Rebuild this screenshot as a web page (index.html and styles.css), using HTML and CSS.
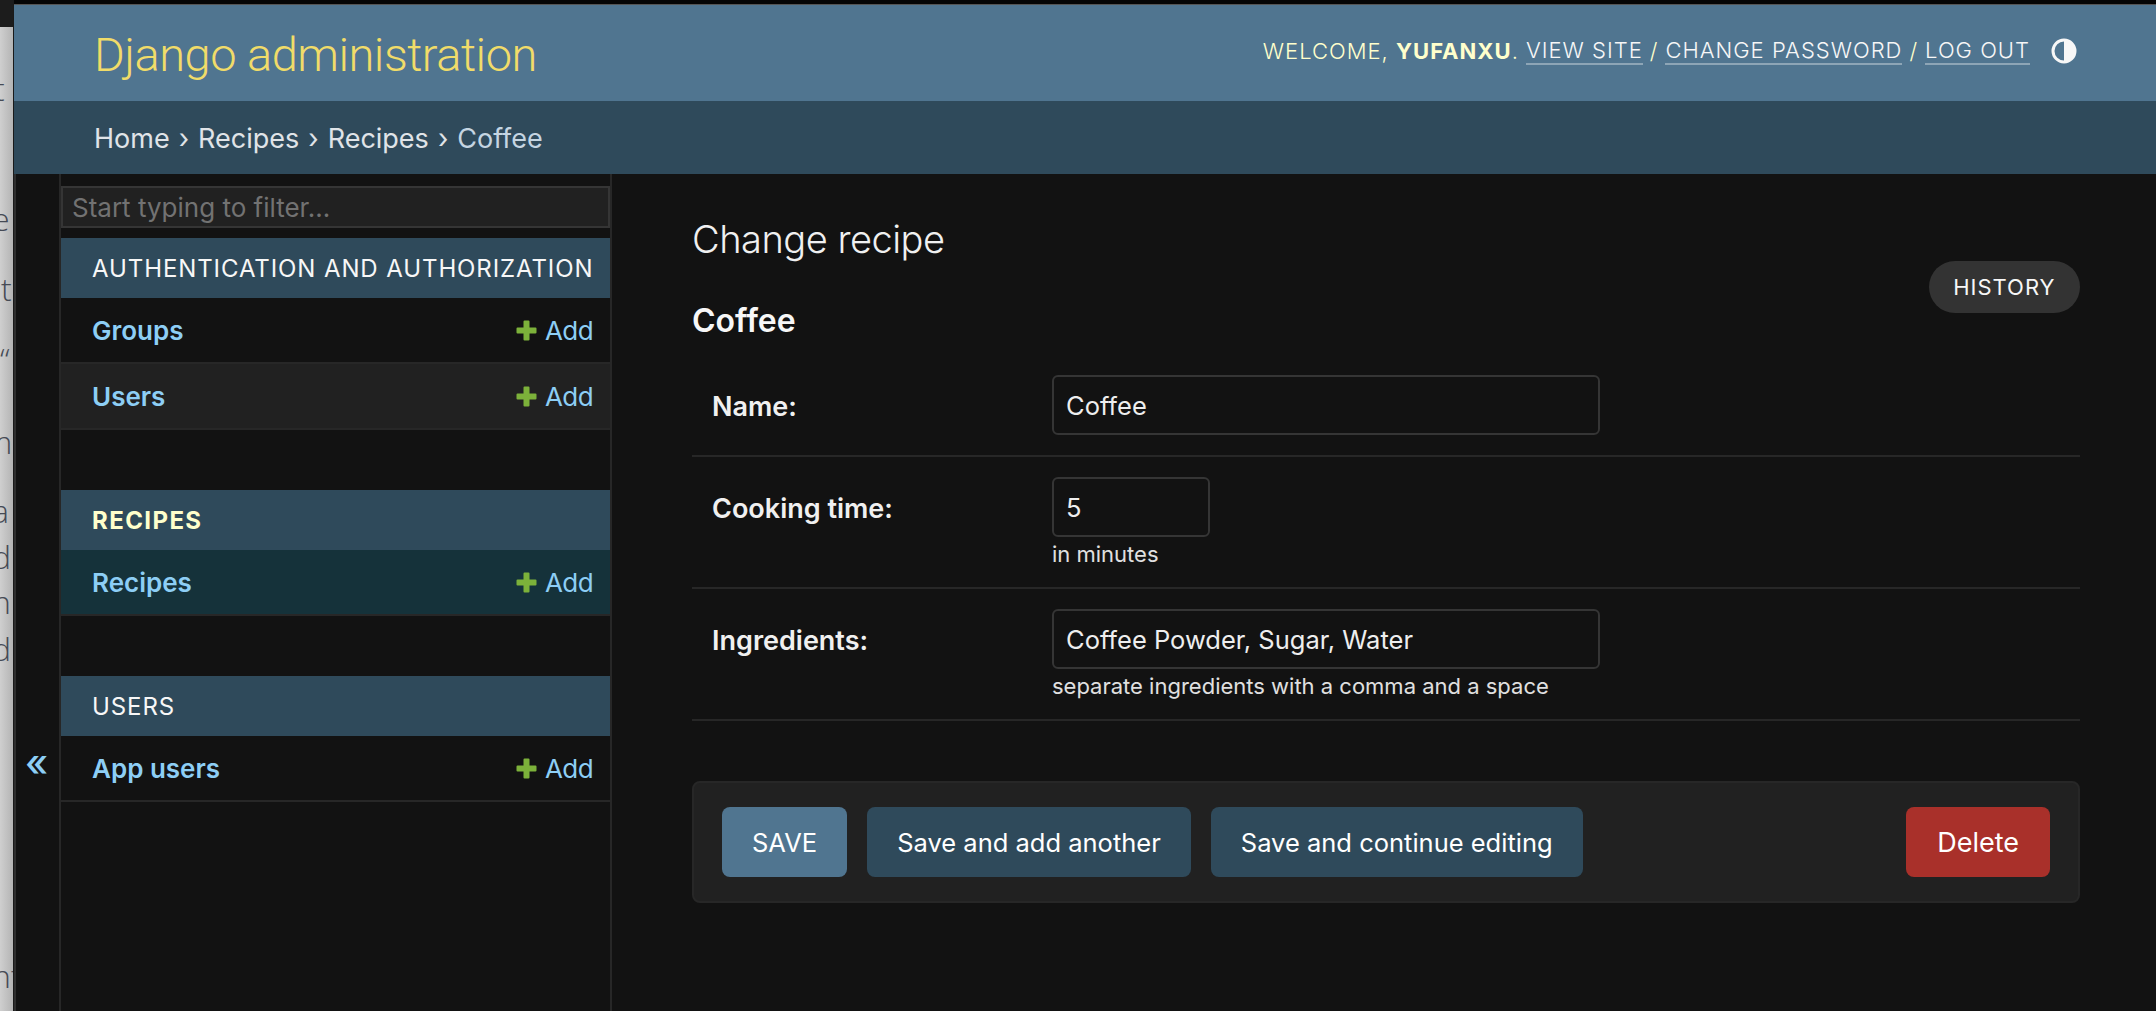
FILE: index.html
```html
<!DOCTYPE html>
<html>
<head>
<meta http-equiv="Content-Type" content="text/html; charset=utf-8"/>
<title>Change recipe | Django site admin</title>
<link rel="stylesheet" href="styles.css">
</head>
<body>

<div class="behind">
  <span class="frag f1">t</span>
  <span class="frag f2">e</span>
  <span class="frag f3">nt</span>
  <span class="frag f4">“</span>
  <span class="frag f5">m</span>
  <span class="frag f6">a</span>
  <span class="frag f7">d</span>
  <span class="frag f8">n</span>
  <span class="frag f9">d</span>
  <span class="frag f10">nt</span>
</div>

<div class="window">
  <div class="topstrip"></div>

  <div class="header">
    <div class="branding">Django administration</div>
    <div class="usertools">
      <span class="welcome">Welcome, <strong>yufanxu</strong>.</span>
      <a href="#">View site</a> <span class="slash">/</span>
      <a href="#">Change password</a> <span class="slash">/</span>
      <a href="#">Log out</a>
      <svg class="theme" viewBox="0 0 26 26" width="26" height="26">
        <circle cx="13" cy="13" r="11" fill="none" stroke="#f7f7f7" stroke-width="3"/>
        <path d="M13 2a11 11 0 0 1 0 22z" fill="#f7f7f7"/>
      </svg>
    </div>
  </div>

  <div class="breadcrumbs">
    <a href="#">Home</a> › <a href="#">Recipes</a> › <a href="#">Recipes</a> › <span class="current">Coffee</span>
  </div>

  <div class="main">
    <div class="toggle">«</div>

    <div class="sidebar">
      <input class="filter" placeholder="Start typing to filter...">

      <div class="module">
        <div class="caption">Authentication and Authorization</div>
        <div class="row"><a class="model" href="#">Groups</a><a class="add" href="#"><svg viewBox="0 0 21 21" width="21" height="21"><path d="M7.5 1.5a1 1 0 0 1 1-1h4a1 1 0 0 1 1 1v6h6a1 1 0 0 1 1 1v4a1 1 0 0 1-1 1h-6v6a1 1 0 0 1-1 1h-4a1 1 0 0 1-1-1v-6h-6a1 1 0 0 1-1-1v-4a1 1 0 0 1 1-1h6z"/></svg>Add</a></div>
        <div class="row alt"><a class="model" href="#">Users</a><a class="add" href="#"><svg viewBox="0 0 21 21" width="21" height="21"><path d="M7.5 1.5a1 1 0 0 1 1-1h4a1 1 0 0 1 1 1v6h6a1 1 0 0 1 1 1v4a1 1 0 0 1-1 1h-6v6a1 1 0 0 1-1 1h-4a1 1 0 0 1-1-1v-6h-6a1 1 0 0 1-1-1v-4a1 1 0 0 1 1-1h6z"/></svg>Add</a></div>
      </div>

      <div class="module">
        <div class="caption current-app">Recipes</div>
        <div class="row selected"><a class="model" href="#">Recipes</a><a class="add" href="#"><svg viewBox="0 0 21 21" width="21" height="21"><path d="M7.5 1.5a1 1 0 0 1 1-1h4a1 1 0 0 1 1 1v6h6a1 1 0 0 1 1 1v4a1 1 0 0 1-1 1h-6v6a1 1 0 0 1-1 1h-4a1 1 0 0 1-1-1v-6h-6a1 1 0 0 1-1-1v-4a1 1 0 0 1 1-1h6z"/></svg>Add</a></div>
      </div>

      <div class="module">
        <div class="caption">Users</div>
        <div class="row"><a class="model" href="#">App users</a><a class="add" href="#"><svg viewBox="0 0 21 21" width="21" height="21"><path d="M7.5 1.5a1 1 0 0 1 1-1h4a1 1 0 0 1 1 1v6h6a1 1 0 0 1 1 1v4a1 1 0 0 1-1 1h-6v6a1 1 0 0 1-1 1h-4a1 1 0 0 1-1-1v-6h-6a1 1 0 0 1-1-1v-4a1 1 0 0 1 1-1h6z"/></svg>Add</a></div>
      </div>
    </div>

    <div class="content">
      <div class="content-head">
        <div>
          <h1>Change recipe</h1>
          <h2>Coffee</h2>
        </div>
        <a class="history" href="#">History</a>
      </div>

      <div class="form-row">
        <label>Name:</label>
        <div><input class="text" value="Coffee"></div>
      </div>
      <div class="form-row">
        <label>Cooking time:</label>
        <div>
          <input class="text short" value="5">
          <div class="help">in minutes</div>
        </div>
      </div>
      <div class="form-row">
        <label>Ingredients:</label>
        <div>
          <input class="text" value="Coffee Powder, Sugar, Water">
          <div class="help">separate ingredients with a comma and a space</div>
        </div>
      </div>

      <div class="submit-row">
        <a class="btn default" href="#">Save</a>
        <a class="btn" href="#">Save and add another</a>
        <a class="btn" href="#">Save and continue editing</a>
        <a class="btn delete" href="#">Delete</a>
      </div>
    </div>
  </div>
</div>

</body>
</html>
```

FILE: styles.css
```css
* {
  box-sizing: border-box;
}

html, body {
  margin: 0;
  height: 1011px;
  overflow: hidden;
}

body {
  display: flex;
  font-family: Inter, "Liberation Sans", sans-serif;
  font-size: 26px;
  color: #eeeeee;
  background-color: #121212;
}

a {
  color: inherit;
  text-decoration: none;
}

/* the other window peeking out on the left */
.behind {
  width: 14px;
  flex: none;
  height: 1011px;
  overflow: hidden;
  border-top: 27px solid #1c1c1c;
  border-right: 1px solid #1a1a1a;
  background: linear-gradient(to right, #cfcfcf, #b4b4b4);
  color: #454a55;
  font-family: "Open Sans", sans-serif;
  font-size: 32px;
  font-weight: 300;
  line-height: 40px;
}

.frag {
  display: block;
  height: 40px;
  white-space: nowrap;
}
.f1 { margin-top: 42px; margin-left: -6px; }
.f2 { margin-top: 90px; margin-left: -8px; }
.f3 { margin-top: 30px; margin-left: -18px; }
.f4 { margin-top: 30px; margin-left: 0; }
.f5 { margin-top: 43px; margin-left: -16px; }
.f6 { margin-top: 29px; margin-left: -8px; }
.f7 { margin-top: 6px; margin-left: -8px; }
.f8 { margin-top: 5px; margin-left: -8px; }
.f9 { margin-top: 7px; margin-left: -8px; }
.f10 { margin-top: 287px; margin-left: -8px; }

.window {
  flex: 1;
  min-width: 0;
  display: flex;
  flex-direction: column;
  box-shadow: inset 2px 0 0 rgba(255, 255, 255, 0.12);
}

.topstrip {
  height: 5px;
  flex: none;
  background-color: #050505;
  border-bottom: 1px solid #555;
}

.header {
  height: 96px;
  flex: none;
  display: flex;
  align-items: center;
  justify-content: space-between;
  padding: 0 79px 0 80px;
  background-color: #507590;
}

.branding {
  padding-top: 2px;
  font-family: Roboto, Inter, sans-serif;
  font-size: 47px;
  font-weight: 300;
  letter-spacing: -0.5px;
  color: #f1dc69;
}

.usertools {
  display: flex;
  align-items: center;
  gap: 7px;
  margin-top: -4px;
  font-size: 22px;
  font-weight: 300;
  letter-spacing: 1px;
  text-transform: uppercase;
  color: #f7f7f7;
}

.usertools a {
  border-bottom: 2px solid rgba(255, 255, 255, 0.35);
}

.welcome, .slash {
  color: #ffffcc;
}

.welcome strong {
  font-weight: 700;
}

.theme {
  margin-left: 14px;
}

.breadcrumbs {
  height: 73px;
  flex: none;
  display: flex;
  align-items: center;
  gap: 9px;
  padding: 2px 0 0 80px;
  background-color: #2f4a5b;
  color: #e0e4e8;
  font-size: 27px;
}

.breadcrumbs .current {
  color: #c5d5e2;
}

.main {
  flex: 1;
  display: flex;
  min-height: 0;
}

.toggle {
  width: 45px;
  flex: none;
  padding-top: 558px;
  text-align: center;
  font-size: 38px;
  font-weight: 500;
  line-height: 60px;
  color: #8dcef5;
}

.sidebar {
  width: 553px;
  flex: none;
  padding-top: 12px;
  border-left: 2px solid #272727;
  border-right: 2px solid #272727;
}

.filter {
  display: block;
  width: 100%;
  height: 42px;
  margin-bottom: 10px;
  padding: 0 9px;
  border: 2px solid #353535;
  background-color: #212121;
  font: inherit;
  color: #eeeeee;
}

.filter::placeholder {
  color: #727272;
}

.module {
  margin-bottom: 60px;
}

.caption {
  height: 60px;
  line-height: 62px;
  padding-left: 31px;
  background-color: #2f4a5b;
  color: #f7f7f7;
  font-size: 24px;
  letter-spacing: 0.9px;
  text-transform: uppercase;
  white-space: nowrap;
}

.current-app {
  color: #ffffcc;
  font-weight: 700;
  letter-spacing: 1.4px;
}

.row {
  height: 66px;
  display: flex;
  align-items: center;
  justify-content: space-between;
  padding: 0 17px 0 31px;
  border-bottom: 2px solid #272727;
  color: #8dcef5;
}

.alt {
  background-color: #212121;
}

.selected {
  background-color: #15323a;
}

.model {
  font-weight: 600;
}

.add {
  display: flex;
  align-items: center;
  gap: 8px;
  letter-spacing: -0.6px;
}

.add svg {
  fill: #7cb13a;
}

.content {
  flex: 1;
  margin: 0 76px 0 80px;
}

.content-head {
  display: flex;
  justify-content: space-between;
  height: 181px;
}

h1 {
  margin: 40px 0 0;
  font-size: 38px;
  font-weight: 300;
  letter-spacing: -0.5px;
  line-height: 50px;
  color: #f0f0f0;
}

h2 {
  margin: 32px 0 0;
  font-size: 32px;
  font-weight: 600;
  line-height: 50px;
  color: #f7f7f7;
}

.history {
  margin-top: 87px;
  height: 52px;
  padding: 0 24.5px;
  line-height: 52px;
  border-radius: 26px;
  background-color: #333333;
  color: #f7f7f7;
  font-size: 22px;
  letter-spacing: 1px;
  text-transform: uppercase;
}

.form-row {
  display: flex;
  padding: 20px 20px 20px;
  border-bottom: 2px solid #272727;
}

.form-row label {
  width: 340px;
  flex: none;
  padding-top: 15px;
  font-size: 27px;
  font-weight: 600;
  color: #f0f0f0;
}

.text {
  display: block;
  width: 548px;
  height: 60px;
  padding: 0 12px;
  border: 2px solid #353535;
  border-radius: 6px;
  background-color: #121212;
  font: inherit;
  font-size: 25.5px;
  color: #eeeeee;
}

.short {
  width: 158px;
}

.help {
  margin-top: 5px;
  font-size: 22px;
  line-height: 25px;
  color: #e0e0e0;
}

.submit-row {
  display: flex;
  gap: 20px;
  margin-top: 60px;
  padding: 24px 28px;
  border: 2px solid #272727;
  border-radius: 8px;
  background-color: #212121;
}

.btn {
  height: 70px;
  line-height: 71px;
  padding: 0 30px;
  border-radius: 8px;
  background-color: #2f4a5b;
  color: #ffffff;
  font-size: 25.5px;
}

.default {
  background-color: #507590;
  text-transform: uppercase;
}

.delete {
  margin-left: auto;
  padding: 0 31px;
  background-color: #a9302a;
  font-size: 27px;
}
```
